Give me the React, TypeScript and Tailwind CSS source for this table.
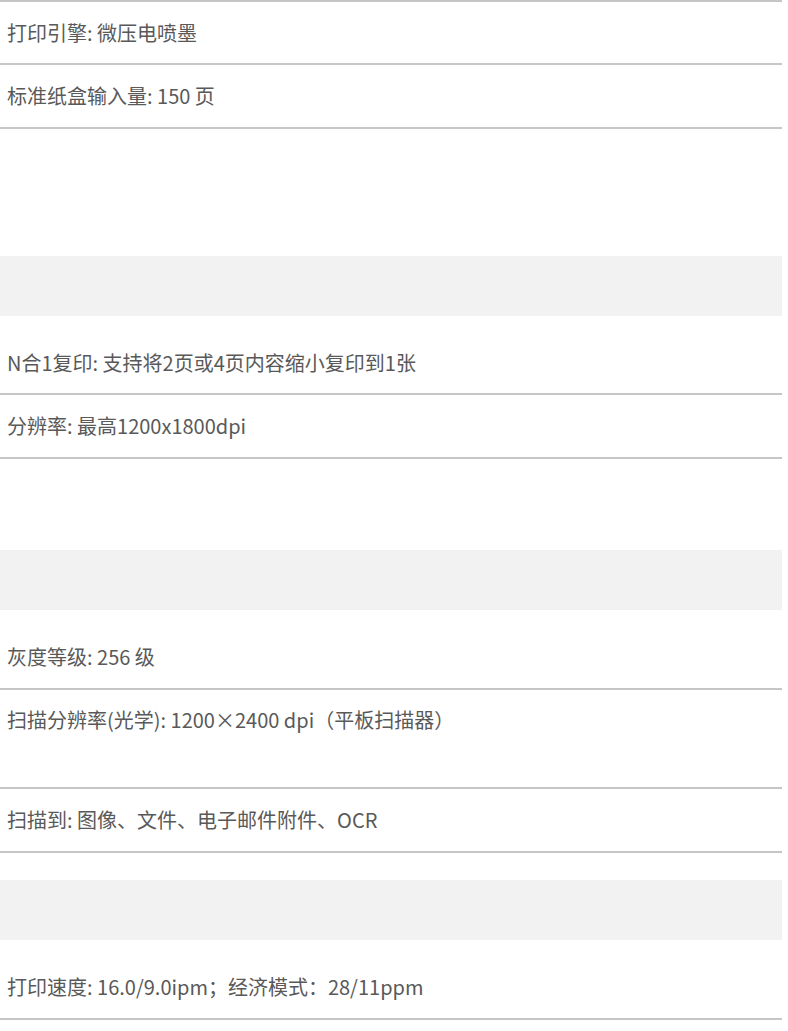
import React from "react";

function Row({ text, h = "h-[64px]", extra = "" }: { text: string; h?: string; extra?: string }) {
  return (
    <div className={`${h} ${extra} border-b-2 border-[#c6c6c6] flex items-center pl-[7px]`}>
      <span className="whitespace-nowrap">{text}</span>
    </div>
  );
}

export default function App() {
  return (
    <div
      className="w-[782px] bg-white text-[20px] text-[#595959] leading-none"
      style={{ fontFamily: "'Microsoft YaHei', 'Noto Sans CJK SC', 'Noto Sans', sans-serif" }}
    >
      <div className="border-t-2 border-[#c6c6c6]">
        <Row text="打印引擎: 微压电喷墨" h="h-[63px]" />
        <Row text="标准纸盒输入量: 150 页" h="h-[64px]" />
      </div>
      <div className="h-[127px]" />
      <div className="h-[60px] bg-[#f2f2f2]" />
      <div className="pt-[16px] border-b-2 border-[#c6c6c6]">
        <div className="h-[61px] flex items-center pl-[7px]">N合1复印: 支持将2页或4页内容缩小复印到1张</div>
      </div>
      <Row text="分辨率: 最高1200x1800dpi" h="h-[64px]" />
      <div className="h-[91px]" />
      <div className="h-[60px] bg-[#f2f2f2]" />
      <div className="pt-[16px] border-b-2 border-[#c6c6c6]">
        <div className="h-[62px] flex items-center pl-[7px]">灰度等级: 256 级</div>
      </div>
      <div className="h-[99px] border-b-2 border-[#c6c6c6] pl-[7px]">
        <div className="h-[60px] flex items-center">扫描分辨率(光学): 1200×2400 dpi（平板扫描器）</div>
      </div>
      <Row text="扫描到: 图像、文件、电子邮件附件、OCR" h="h-[64px]" />
      <div className="h-[27px]" />
      <div className="h-[60px] bg-[#f2f2f2]" />
      <div className="pt-[16px] border-b-2 border-[#c6c6c6]">
        <div className="h-[62px] flex items-center pl-[7px]">打印速度: 16.0/9.0ipm；经济模式：28/11ppm</div>
      </div>
      <div className="h-[20px]" />
    </div>
  );
}
